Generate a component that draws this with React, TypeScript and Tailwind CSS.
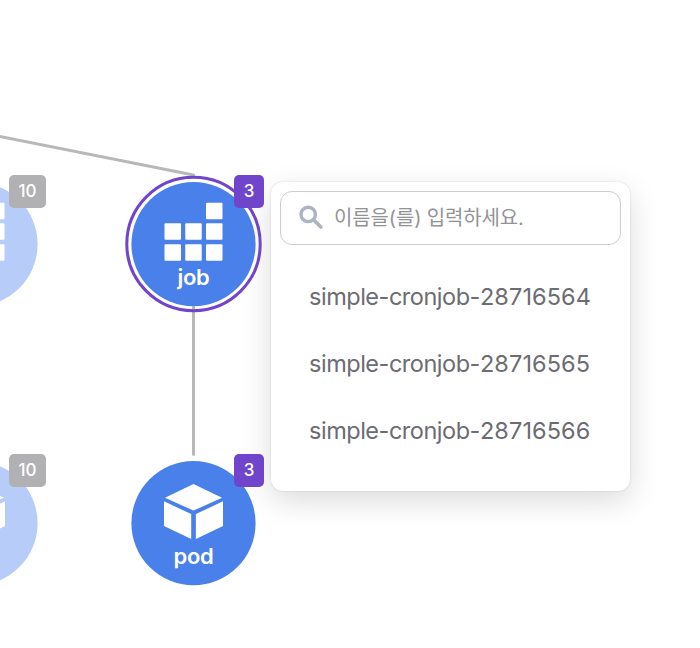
import React from "react";

type Kind = "job" | "pod";

interface NodeProps {
  kind: Kind;
  count: number;
  place: string;
  faded?: boolean;
  selected?: boolean;
}

const cells: [number, number][] = [
  [83, 20.7],
  [41.5, 41.3],
  [62.25, 41.3],
  [83, 41.3],
  [41.5, 62.2],
  [62.25, 62.2],
  [83, 62.2],
];

function JobIcon() {
  return (
    <>
      {cells.map(([x, y]) => (
        <rect key={`${x}-${y}`} x={x - 8} y={y} width="16.5" height="16.5" rx="1" />
      ))}
    </>
  );
}

function PodIcon() {
  return (
    <>
      <path d="M62.5 23 91 36.7 62.5 49.6 34 36.7Z" />
      <path d="M33 40.3 60.2 53.1V78L33 65.1Z" />
      <path d="M92 40.3 64.9 53.1V78L92 65.1Z" />
    </>
  );
}

function GraphNode({ kind, count, place, faded = false, selected = false }: NodeProps) {
  return (
    <div className={`absolute h-[125px] w-[125px] ${place}`}>
      <svg className="absolute inset-0 overflow-visible" width="125" height="125" fill="white">
        {selected && (
          <circle cx="62.5" cy="62" r="66.7" fill="none" stroke="#7044cb" strokeWidth="3" />
        )}
        <circle cx="62.5" cy="62.2" r="62.1" fill={faded ? "#b7ccf8" : "#4a80e9"} />
        {kind === "job" ? <JobIcon /> : <PodIcon />}
      </svg>
      {!faded && (
        <span className="absolute inset-x-0 top-[81px] text-center text-[22px] leading-7 font-[560] tracking-[-0.3px] text-white">
          {kind}
        </span>
      )}
      <span
        className={`absolute -top-[7px] flex h-[33px] items-center justify-center rounded-[5px] text-[17px] font-medium text-white ${
          faded ? "left-[96px] w-[37px] bg-[#b1b1b3]" : "left-[103px] w-[30px] bg-[#7044cb]"
        }`}
      >
        {count}
      </span>
    </div>
  );
}

const ids = ["28716564", "28716565", "28716566"];

export default function App() {
  return (
    <main className="relative h-[648px] w-[700px] overflow-hidden bg-white font-['Inter','Noto_Sans_CJK_KR',sans-serif]">
      <svg
        className="absolute inset-0"
        width="700"
        height="648"
        fill="none"
        stroke="#b8b8b8"
        strokeWidth="3"
        strokeLinecap="round"
      >
        <path d="M-10 134.5 193.5 175" />
        <path d="M193.5 307V454.3" />
      </svg>

      <section className="absolute top-[182px] left-[271px] flex h-[309px] w-[359px] flex-col rounded-xl bg-white px-[9px] pt-[9px] shadow-[0_0_2px_rgba(0,0,0,0.16),0_10px_30px_rgba(0,0,0,0.14)]">
        <label className="flex h-[54px] shrink-0 items-center rounded-xl border border-[#cdcdcf] pl-[18px]">
          <svg className="-mt-0.5" width="25" height="25" viewBox="0 0 25 25" fill="none" stroke="#adb4c1">
            <circle cx="9.2" cy="9.4" r="7.2" strokeWidth="3.4" />
            <path d="M14.5 14.7 21.8 22" strokeWidth="3.6" strokeLinecap="round" />
          </svg>
          <span className="ml-[10px] text-[20px] leading-7 tracking-[-0.15px] whitespace-nowrap text-[#939396]">
            이름을(를) 입력하세요.
          </span>
        </label>
        <ul className="mt-[18px] pl-[29px]">
          {ids.map((id) => (
            <li
              key={id}
              className="flex h-[67px] items-center text-[23.5px] font-[440] whitespace-nowrap text-[#6c6c72]"
            >
              <span className="tracking-[-0.48px]">simple-cronjob-</span>
              <span className="tracking-[0.1px]">{id}</span>
            </li>
          ))}
        </ul>
      </section>

      <GraphNode kind="job" count={10} faded place="top-[182px] left-[-87px]" />
      <GraphNode kind="pod" count={10} faded place="top-[461px] left-[-87px]" />
      <GraphNode kind="job" count={3} selected place="top-[182px] left-[131px]" />
      <GraphNode kind="pod" count={3} place="top-[461px] left-[131px]" />
    </main>
  );
}
